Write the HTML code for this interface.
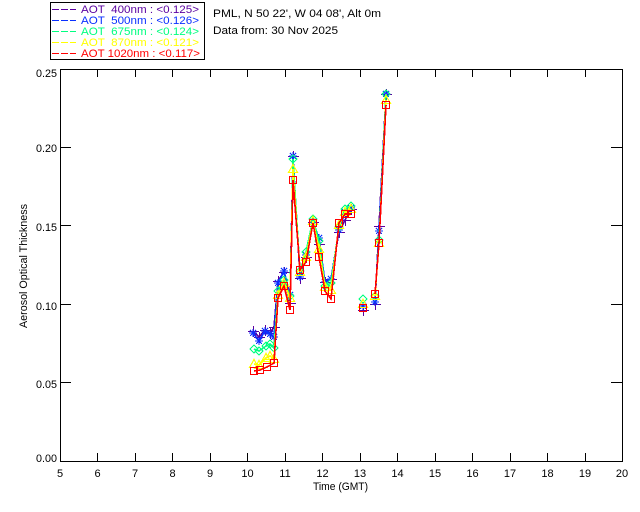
<!DOCTYPE html>
<html><head><meta charset="utf-8"><style>
html,body{margin:0;padding:0;background:#fff}
svg{display:block}
text{font-family:"Liberation Sans",sans-serif;font-size:11px;white-space:pre}
.l{shape-rendering:crispEdges;stroke:#000;fill:none}
.d{fill:none;stroke-width:1.6;stroke-linejoin:miter;shape-rendering:crispEdges}
</style></head><body>
<svg width="640" height="512" viewBox="0 0 640 512" xmlns="http://www.w3.org/2000/svg">
<defs>
<marker id="mp" markerUnits="userSpaceOnUse" markerWidth="12" markerHeight="12" refX="6" refY="6" overflow="visible"><path d="M1 6.5H12M6.5 1V12" stroke="#5a00a0" stroke-width="1" fill="none" shape-rendering="crispEdges"/></marker>
<marker id="mb" markerUnits="userSpaceOnUse" markerWidth="12" markerHeight="12" refX="6" refY="6" overflow="visible"><path d="M2 6H10M6 2V10M3 3L9 9M9 3L3 9" stroke="#0a30ff" stroke-width="1.3" fill="none" shape-rendering="crispEdges"/></marker>
<marker id="mg" markerUnits="userSpaceOnUse" markerWidth="12" markerHeight="12" refX="6" refY="6" overflow="visible"><path d="M6 2L10 6L6 10L2 6Z" stroke="#00ff80" stroke-width="1" fill="none" shape-rendering="crispEdges"/></marker>
<marker id="my" markerUnits="userSpaceOnUse" markerWidth="12" markerHeight="12" refX="6" refY="6" overflow="visible"><path d="M6 1.5L10.5 9.5H1.5Z" stroke="#ffff00" stroke-width="1.2" fill="none" shape-rendering="crispEdges"/></marker>
<marker id="mr" markerUnits="userSpaceOnUse" markerWidth="12" markerHeight="12" refX="6" refY="6" overflow="visible"><rect x="2.5" y="2.5" width="7" height="7" stroke="#ff0000" stroke-width="1" fill="none" shape-rendering="crispEdges"/></marker>
</defs>

<!-- legend -->
<rect class="l" x="50.5" y="2.5" width="154" height="57"/>
<path class="l" d="M52 9.5H76" style="stroke:#5a00a0" stroke-dasharray="7 2"/>
<path class="l" d="M52 20.5H76" style="stroke:#0a30ff" stroke-dasharray="7 2"/>
<path class="l" d="M52 31.5H76" style="stroke:#00ff80" stroke-dasharray="7 2"/>
<path class="l" d="M52 42.5H76" style="stroke:#ffff00" stroke-dasharray="7 2"/>
<path class="l" d="M52 53.5H76" style="stroke:#ff0000" stroke-dasharray="7 2"/>
<text x="81" y="13" fill="#5a00a0" textLength="118" lengthAdjust="spacingAndGlyphs">AOT  400nm : &lt;0.125&gt;</text>
<text x="81" y="24" fill="#0a30ff" textLength="118" lengthAdjust="spacingAndGlyphs">AOT  500nm : &lt;0.126&gt;</text>
<text x="81" y="35" fill="#00ff80" textLength="118" lengthAdjust="spacingAndGlyphs">AOT  675nm : &lt;0.124&gt;</text>
<text x="81" y="46" fill="#ffff00" textLength="118" lengthAdjust="spacingAndGlyphs">AOT  870nm : &lt;0.121&gt;</text>
<text x="81" y="57" fill="#ff0000" textLength="119" lengthAdjust="spacingAndGlyphs">AOT 1020nm : &lt;0.117&gt;</text>

<text x="213" y="17" fill="#000" textLength="168" lengthAdjust="spacingAndGlyphs">PML, N 50 22', W 04 08', Alt 0m</text>
<text x="213" y="34" fill="#000" textLength="125" lengthAdjust="spacingAndGlyphs">Data from: 30 Nov 2025</text>

<!-- axes -->
<rect class="l" x="60.5" y="69.5" width="562" height="392"/>
<path class="l" d="M97.5 69V77M135.5 69V77M172.5 69V77M210.5 69V77M247.5 69V77M285.5 69V77M322.5 69V77M360.5 69V77M397.5 69V77M435.5 69V77M472.5 69V77M510.5 69V77M547.5 69V77M585.5 69V77"/>
<path class="l" d="M97.5 453V461M135.5 453V461M172.5 453V461M210.5 453V461M247.5 453V461M285.5 453V461M322.5 453V461M360.5 453V461M397.5 453V461M435.5 453V461M472.5 453V461M510.5 453V461M547.5 453V461M585.5 453V461"/>
<path class="l" d="M60 147.5H71M60 225.5H71M60 304.5H71M60 382.5H71M611 147.5H622M611 225.5H622M611 304.5H622M611 382.5H622"/>

<g fill="#000">
<text x="36" y="77" textLength="21" lengthAdjust="spacingAndGlyphs">0.25</text>
<text x="36" y="152" textLength="21" lengthAdjust="spacingAndGlyphs">0.20</text>
<text x="36" y="231" textLength="21" lengthAdjust="spacingAndGlyphs">0.15</text>
<text x="36" y="310" textLength="21" lengthAdjust="spacingAndGlyphs">0.10</text>
<text x="36" y="388" textLength="21" lengthAdjust="spacingAndGlyphs">0.05</text>
<text x="36" y="462" textLength="21" lengthAdjust="spacingAndGlyphs">0.00</text>
<g text-anchor="middle">
<text x="60" y="477">5</text><text x="97.5" y="477">6</text><text x="135" y="477">7</text><text x="172.5" y="477">8</text><text x="210" y="477">9</text>
<text x="247.5" y="477">10</text><text x="285" y="477">11</text><text x="322.5" y="477">12</text><text x="360" y="477">13</text><text x="397.5" y="477">14</text>
<text x="435" y="477">15</text><text x="472.5" y="477">16</text><text x="510" y="477">17</text><text x="547.5" y="477">18</text><text x="585" y="477">19</text><text x="622" y="477">20</text>
</g>
<text x="313" y="490" textLength="55" lengthAdjust="spacingAndGlyphs">Time (GMT)</text>
<text transform="translate(27 328) rotate(-90)" textLength="124" lengthAdjust="spacingAndGlyphs">Aerosol Optical Thickness</text>
</g>

<!-- data -->
<path class="d" stroke="#5a00a0" marker-start="url(#mp)" marker-mid="url(#mp)" marker-end="url(#mp)" d="M253 331L259 337L265 330L270 333L274 327L278 281L284 272L290 303L293 156L300 278L306 257L313 222L319 244L325 282L331 279L339 232L345 220L351 209M363 310M375 304L379 226L386 94"/>
<path class="d" stroke="#0a30ff" marker-start="url(#mb)" marker-mid="url(#mb)" marker-end="url(#mb)" d="M253 333L259 341L265 331L270 334L274 337L278 283L284 271L290 295L293 156L300 277L306 255L313 222L319 238L325 282L331 279L339 230L345 212L351 208M363 306M375 302L379 231L386 94"/>
<path class="d" stroke="#00ff80" marker-start="url(#mg)" marker-mid="url(#mg)" marker-end="url(#mg)" d="M254 349L259 351L266 346L270 344L274 348L278 291L284 280L290 296L293 159L300 271L306 252L313 219L319 241L325 286L331 283L339 227L345 209L351 206M363 299M375 296L379 240L386 94"/>
<path class="d" stroke="#ffff00" marker-start="url(#my)" marker-mid="url(#my)" marker-end="url(#my)" d="M254 364L259 365L266 358L270 356L274 359L278 295L284 283L290 298L293 169L300 272L306 257L313 221L319 249L325 287L331 290L339 225L345 212L351 209M363 304M375 296L379 243L386 100"/>
<path class="d" stroke="#ff0000" marker-start="url(#mr)" marker-mid="url(#mr)" marker-end="url(#mr)" d="M254 371L260 370L267 367L274 363L278 298L284 286L290 310L293 180L300 270L306 262L313 223L319 257L325 291L331 299L339 223L345 214L351 214M363 308M375 294L379 243L386 105"/>
</svg>
</body></html>
